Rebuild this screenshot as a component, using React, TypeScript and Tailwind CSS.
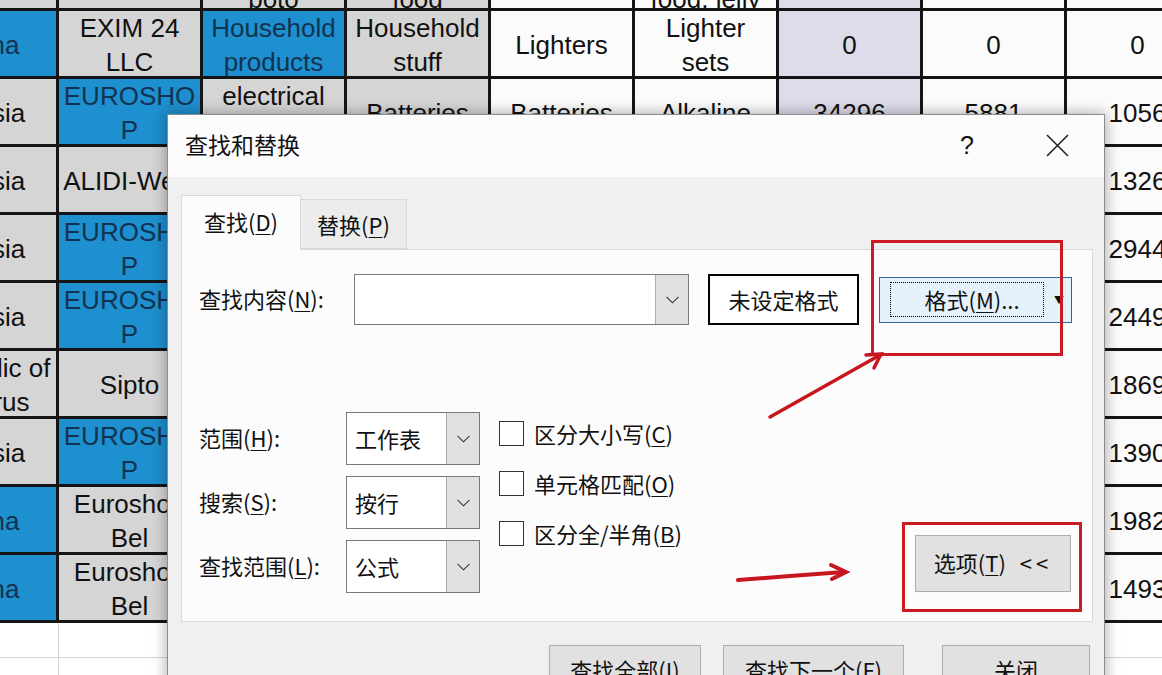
import React from "react";

type Cell = { bg: string; l?: string[]; dark?: boolean };

const G = "bg-[#d5d5d5]";
const B = "bg-[#1e8fcf]";
const W = "bg-[#fbfbfb]";
const L = "bg-[#dedcea]";

const blank = (bg: string): Cell => ({ bg });

// row 0 is the bottom of a row scrolled out of view
const rows: Cell[][] = [
  [blank(G), blank(G), { bg: G, l: ["Snacks", "poto"] }, { bg: G, l: ["Baby", "food"] }, blank(W), { bg: W, l: ["Jam,", "food, jelly"] }, blank(L), blank(W), blank(W)],
  [{ bg: B, l: ["China"], dark: true }, { bg: G, l: ["EXIM 24", "LLC"] }, { bg: B, l: ["Household", "products"], dark: true }, { bg: G, l: ["Household", "stuff"] }, { bg: W, l: ["Lighters"] }, { bg: W, l: ["Lighter", "sets"] }, { bg: L, l: ["0"] }, { bg: W, l: ["0"] }, { bg: W, l: ["0"] }],
  [{ bg: G, l: ["Russia"] }, { bg: B, l: ["EUROSHO", "P"], dark: true }, { bg: G, l: ["electrical", "goods"] }, { bg: G, l: ["Batteries"] }, { bg: W, l: ["Batteries"] }, { bg: W, l: ["Alkaline"] }, { bg: L, l: ["34296"] }, { bg: W, l: ["5881"] }, { bg: W, l: ["1056"] }],
  [{ bg: G, l: ["Russia"] }, { bg: G, l: ["ALIDI-West"] }, blank(G), blank(G), blank(W), blank(W), blank(L), blank(W), { bg: W, l: ["1326"] }],
  [{ bg: G, l: ["Russia"] }, { bg: B, l: ["EUROSHO", "P"], dark: true }, blank(G), blank(G), blank(W), blank(W), blank(L), blank(W), { bg: W, l: ["2944"] }],
  [{ bg: G, l: ["Russia"] }, { bg: B, l: ["EUROSHO", "P"], dark: true }, blank(G), blank(G), blank(W), blank(W), blank(L), blank(W), { bg: W, l: ["2449"] }],
  [{ bg: G, l: ["Republic of", "Belarus"] }, { bg: G, l: ["Sipto"] }, blank(G), blank(G), blank(W), blank(W), blank(L), blank(W), { bg: W, l: ["1869"] }],
  [{ bg: G, l: ["Russia"] }, { bg: B, l: ["EUROSHO", "P"], dark: true }, blank(G), blank(G), blank(W), blank(W), blank(L), blank(W), { bg: W, l: ["1390"] }],
  [{ bg: B, l: ["China"], dark: true }, { bg: G, l: ["Euroshop", "Bel"] }, blank(G), blank(G), blank(W), blank(W), blank(L), blank(W), { bg: W, l: ["1982"] }],
  [{ bg: B, l: ["China"], dark: true }, { bg: G, l: ["Euroshop", "Bel"] }, blank(G), blank(G), blank(W), blank(W), blank(L), blank(W), { bg: W, l: ["1493"] }],
];

function Chevron() {
  return (
    <svg width="13" height="8" viewBox="0 0 13 8">
      <polyline points="0.5,0.8 6.5,6.8 12.5,0.8" fill="none" stroke="#333" strokeWidth="1.1" />
    </svg>
  );
}

function Key({ k }: { k: string }) {
  return <span className="underline underline-offset-[3px] decoration-1">{k}</span>;
}

function Select({ value }: { value: string }) {
  return (
    <div className="w-[134px] h-[53px] border border-[#7a7a7a] bg-white flex">
      <div className="flex-1 flex items-center pl-[8px] pb-[2px]">{value}</div>
      <div className="w-[33px] bg-[#e1e1e1] border-l border-[#adadad] flex items-center justify-center">
        <Chevron />
      </div>
    </div>
  );
}

function Check({ children }: { children: React.ReactNode }) {
  return (
    <div className="h-[25px] flex items-center">
      <div className="w-[25px] h-[25px] border-[1.5px] border-[#333] bg-white" />
      <span className="ml-[10px] mt-[-2px]">{children}</span>
    </div>
  );
}

function Dialog() {
  return (
    <div className="absolute left-[167px] top-[114px] w-[938px] h-[600px] bg-[#f0f0f0] border border-[#8c8c8c] shadow-[0_0_14px_rgba(0,0,0,0.35)] text-[#111] text-[22px] font-['Noto_Sans_CJK_SC',sans-serif] leading-none">
      {/* title bar */}
      <div className="h-[62px] bg-[#fcfcfc] flex items-center pl-[17px] pb-[4px]">
        <span className="text-[23px]">查找和替换</span>
        <div className="ml-auto flex items-center mr-[35px] pt-[2px]">
          <span className="text-[25px] font-['Liberation_Sans',sans-serif]">?</span>
          <svg className="ml-[72px]" width="23" height="23" viewBox="0 0 23 23">
            <path d="M1 1 L22 22 M22 1 L1 22" stroke="#222" strokeWidth="1.6" />
          </svg>
        </div>
      </div>

      <div className="px-[13px] pt-[18px]">
        {/* tabs */}
        <div className="flex items-end">
          <div className="relative z-10 mb-[-1px] w-[120px] h-[55px] bg-[#fcfcfc] border border-b-0 border-[#d9d9d9] flex items-center justify-center pb-[4px]">
            查找(<Key k="D" />)
          </div>
          <div className="w-[106px] h-[50px] bg-[#ececec] border border-l-0 border-[#d9d9d9] flex items-center justify-center">
            替换(<Key k="P" />)
          </div>
        </div>

        {/* panel */}
        <div className="w-[912px] h-[373px] bg-[#fcfcfc] border border-[#d9d9d9] flex flex-col">
          <div className="flex items-center pt-[24px] pl-[17px]">
            <div className="w-[155px] pb-[3px]">
              查找内容(<Key k="N" />):
            </div>
            <div className="w-[335px] h-[51px] border border-[#7a7a7a] bg-white flex">
              <div className="flex-1" />
              <div className="w-[33px] bg-[#e1e1e1] border-l border-[#adadad] flex items-center justify-center">
                <Chevron />
              </div>
            </div>
            <div className="ml-[19px] w-[151px] h-[51px] border-2 border-black bg-white flex items-center justify-center pb-[2px]">
              未设定格式
            </div>
            <div className="ml-[20px] w-[193px] h-[46px] bg-[#e5f1fb] border border-[#2c6797] flex items-center pl-[10px]">
              <div className="w-[154px] h-[35px] border border-dotted border-black flex items-center justify-center pl-[10px] pb-[2px]">
                格式(<Key k="M" />)...
              </div>
              <span className="ml-[10px] text-[10px] text-[#111]">▼</span>
            </div>
          </div>

          <div className="flex mt-[87px] pl-[17px]">
            <div className="flex flex-col gap-[11px]">
              <div className="flex items-center">
                <div className="w-[147px] pb-[3px]">范围(<Key k="H" />):</div>
                <Select value="工作表" />
              </div>
              <div className="flex items-center">
                <div className="w-[147px] pb-[3px]">搜索(<Key k="S" />):</div>
                <Select value="按行" />
              </div>
              <div className="flex items-center">
                <div className="w-[147px] pb-[3px]">查找范围(<Key k="L" />):</div>
                <Select value="公式" />
              </div>
            </div>

            <div className="ml-[19px] pt-[9px] flex flex-col gap-[25px]">
              <Check>区分大小写(<Key k="C" />)</Check>
              <Check>单元格匹配(<Key k="O" />)</Check>
              <Check>区分全/半角(<Key k="B" />)</Check>
            </div>

            <div className="flex-1" />
            <div className="mt-[123px] mr-[21px] w-[156px] h-[57px] bg-[#e1e1e1] border border-[#adadad] flex items-center justify-center pb-[3px]">
              选项(<Key k="T" />)<span className="ml-[14px] tracking-[4px]">&lt;&lt;</span>
            </div>
          </div>
        </div>

        {/* bottom buttons */}
        <div className="flex mt-[23px]">
          <div className="ml-[368px] w-[152px] h-[50px] bg-[#e1e1e1] border border-[#adadad] flex items-center justify-center pb-[3px]">
            查找全部(<Key k="I" />)
          </div>
          <div className="ml-[22px] w-[181px] h-[50px] bg-[#e1e1e1] border border-[#adadad] flex items-center justify-center pb-[3px]">
            查找下一个(<Key k="F" />)
          </div>
          <div className="ml-[38px] w-[148px] h-[50px] bg-[#e1e1e1] border border-[#adadad] flex items-center justify-center pb-[3px]">
            关闭
          </div>
        </div>
      </div>
    </div>
  );
}

export default function App() {
  return (
    <div className="relative w-[1162px] h-[675px] overflow-hidden bg-white font-['Liberation_Sans',sans-serif]">
      {/* sheet */}
      <div className="ml-[-85px] mt-[-57px] w-max grid grid-cols-[repeat(9,141px)] gap-[3px] bg-[#151515] border-b-[3px] border-[#151515]">
        {rows.map((row, r) =>
          row.map((c, i) => (
            <div
              key={`${r}-${i}`}
              className={`${c.bg} h-[65px] overflow-hidden flex flex-col items-center justify-center whitespace-nowrap text-[26px] leading-[34px] ${r === 0 ? "pt-[13px]" : "pt-[2px]"} ${c.dark ? "text-[#12334f]" : "text-[#111]"}`}
            >
              {c.l?.map((t, j) => <span key={j}>{t}</span>)}
            </div>
          ))
        )}
      </div>
      <div className="ml-[-85px] w-max grid grid-cols-[repeat(9,143px)] gap-px bg-[#d4d4d4]">
        {Array.from({ length: 18 }).map((_, i) => (
          <div key={i} className="h-[34px] bg-white" />
        ))}
      </div>

      <Dialog />

      {/* red annotations */}
      <div className="absolute left-[871px] top-[240px] w-[192px] h-[116px] border-[3px] border-[#cb1a21]" />
      <div className="absolute left-[902px] top-[522px] w-[180px] h-[90px] border-[3px] border-[#cb1a21]" />
      <svg className="absolute inset-0 pointer-events-none" width="1162" height="675" viewBox="0 0 1162 675">
        <g stroke="#c8161e" strokeWidth="3.5" strokeLinecap="round" fill="none">
          <path d="M770 417 L880 355" />
          <path d="M866 355 L881 354 L874 368" />
          <path d="M738 580 L790 576 L844 572" strokeWidth="4" />
          <path d="M831 565 L846 572 L832 579" strokeWidth="4" />
        </g>
      </svg>
    </div>
  );
}
